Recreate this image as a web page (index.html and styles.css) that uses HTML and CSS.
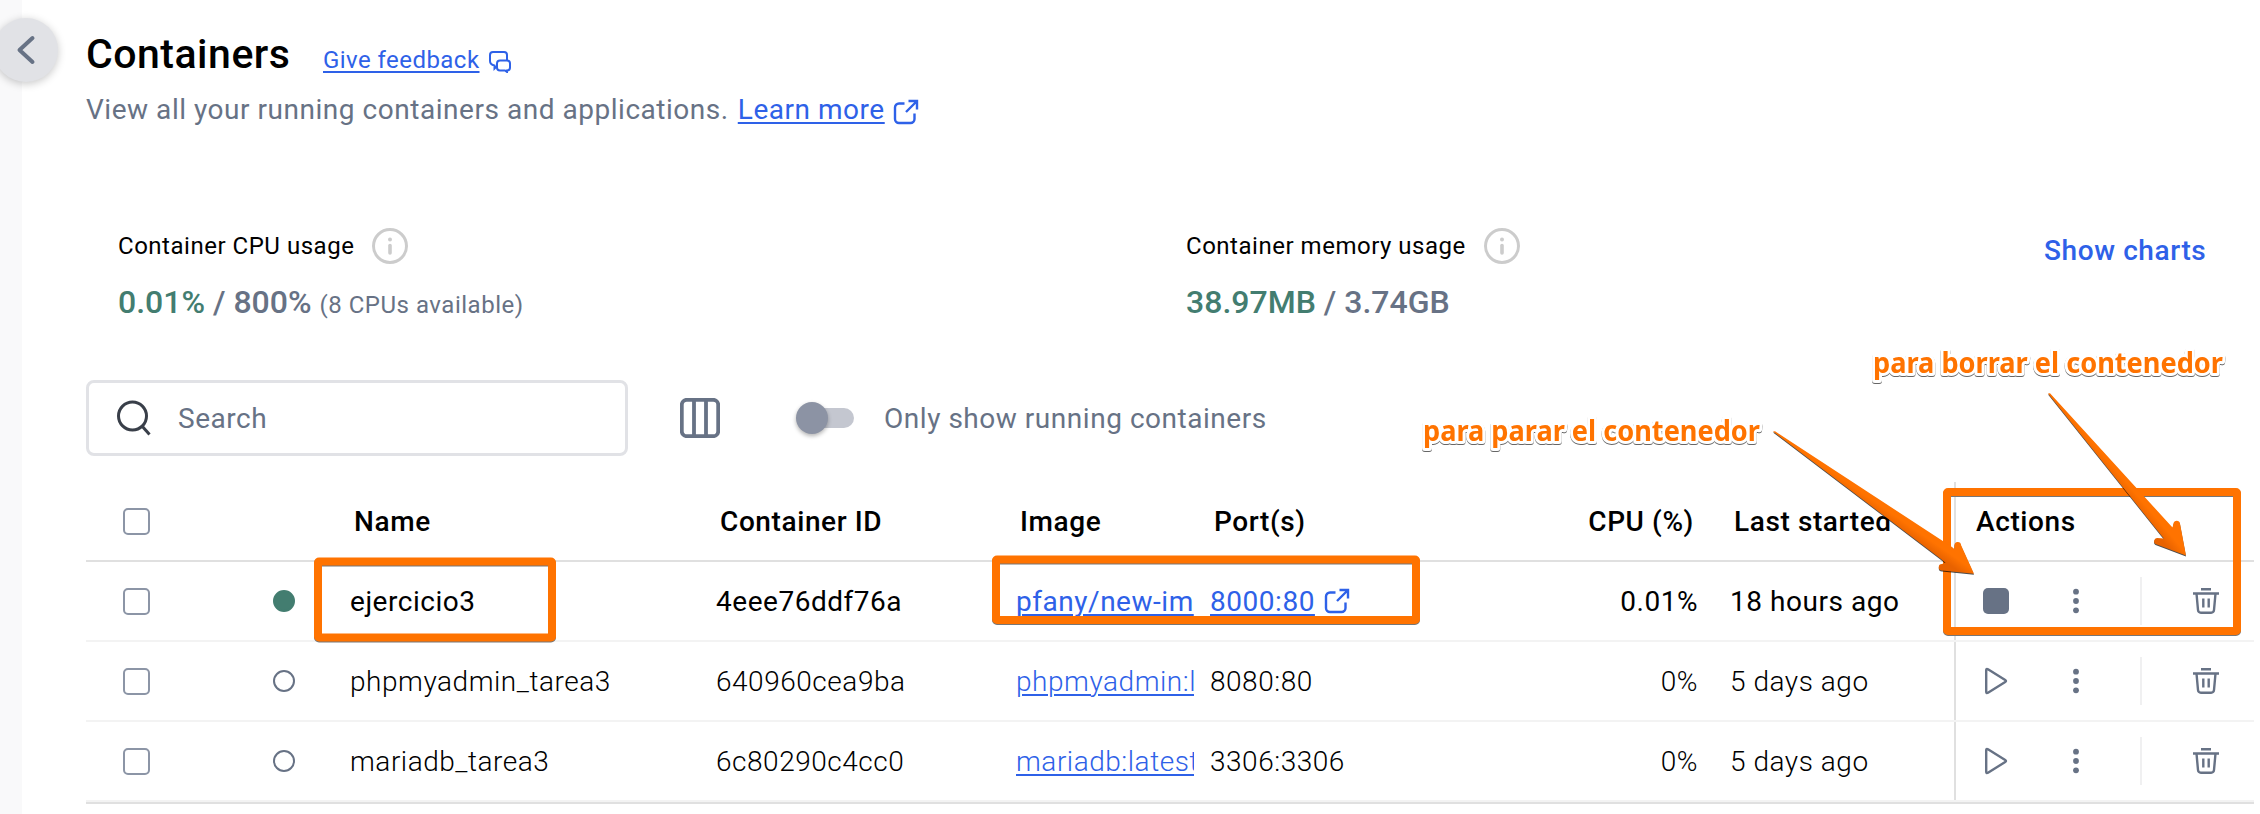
FILE: index.html
```html
<!DOCTYPE html>
<html lang="en">
<head>
<meta charset="utf-8">
<title>Containers</title>
<link rel="stylesheet" href="styles.css">
</head>
<body>
<svg class="sprite" aria-hidden="true">
  <symbol id="i-external" viewBox="0 0 26 26"><path d="M11.500 4.500H6a4 4 0 0 0-4 4V20a4 4 0 0 0 4 4H17.500a4 4 0 0 0 4-4V14.500M13 13 23 3M15.500 2H24V10.500" fill="none" stroke="currentColor" stroke-width="2.400"/></symbol>
  <symbol id="i-info" viewBox="0 0 36 36"><circle cx="18" cy="18" r="16.500" fill="none" stroke="currentColor" stroke-width="3"/><circle cx="18" cy="11.400" r="2" fill="currentColor"/><path d="M18 17.500V25" stroke="currentColor" stroke-width="3.600" stroke-linecap="round"/></symbol>
  <symbol id="i-trash" viewBox="0 0 26 26"><path d="M8 1.300H18M0 5.500H26M3.500 5.500 5 22a3 3 0 0 0 3 2.700H18A3 3 0 0 0 21 22L22.500 5.500M10.300 10.500V19.500M15.700 10.500V19.500" fill="none" stroke="currentColor" stroke-width="2.400"/></symbol>
  <symbol id="i-play" viewBox="0 0 26 28"><path d="M3.200 3.200V24.800q0 2 1.800 1L22.200 15q1.600-1 0-2L5 2.200Q3.200 1.200 3.200 3.200Z" fill="none" stroke="currentColor" stroke-width="2.400"/></symbol>
  <symbol id="i-stop" viewBox="0 0 26 28"><rect width="26" height="26" y="1" rx="5" fill="currentColor"/></symbol>
  <symbol id="i-more" viewBox="0 0 8 26"><g fill="currentColor"><circle cx="4" cy="3.700" r="2.900"/><circle cx="4" cy="13" r="2.900"/><circle cx="4" cy="22.300" r="2.900"/></g></symbol>
</svg>
<div class="app">
  <aside class="rail"><button class="collapse" aria-label="Collapse"><svg viewBox="0 0 20 30"><path d="M16.500 3 3.500 15 16.500 27" fill="none" stroke="currentColor" stroke-width="4" stroke-linecap="round" stroke-linejoin="round"/></svg></button></aside>
  <main class="main">
    <header class="head">
      <h1>Containers</h1>
      <a class="feedback">Give feedback</a>
      <svg class="chat" viewBox="0 0 22 22"><path d="M8 15 5.500 17.500V14.500C3 14 1 12.500 1 10V4a3 3 0 0 1 3-3H15a3 3 0 0 1 3 3V9.500M11 9.500h7a3 3 0 0 1 3 3v4a3 3 0 0 1-3 3v1.500l-2-1.500H11a3 3 0 0 1-3-3v-4a3 3 0 0 1 3-3Z" fill="none" stroke="currentColor" stroke-width="2"/></svg>
    </header>
    <p class="sub"><span>View all your running containers and applications.</span><a>Learn more</a><svg class="ext"><use href="#i-external"/></svg></p>
    <section class="stats">
      <div class="stat"><div class="stat-label"><span>Container CPU usage</span><svg class="info"><use href="#i-info"/></svg></div><div class="stat-value"><b>0.01%</b> / 800% <small>(8 CPUs available)</small></div></div>
      <div class="stat"><div class="stat-label"><span>Container memory usage</span><svg class="info"><use href="#i-info"/></svg></div><div class="stat-value"><b>38.97MB</b> / 3.74GB</div></div>
      <a class="charts">Show charts</a>
    </section>
    <section class="tools">
      <div class="search"><svg viewBox="0 0 34 36"><circle cx="15.500" cy="16" r="14" fill="none" stroke="currentColor" stroke-width="3"/><path d="M25 26 32.500 34.500" stroke="currentColor" stroke-width="3"/></svg><span>Search</span></div>
      <svg class="cols" viewBox="0 0 40 40"><rect x="1.800" y="1.800" width="36.400" height="36.400" rx="5" fill="none" stroke="currentColor" stroke-width="3.800"/><path d="M14 2V38M26 2V38" stroke="currentColor" stroke-width="3.800"/></svg>
      <div class="switch"><i></i></div>
      <span class="only">Only show running containers</span>
    </section>
    <section class="table">
      <div class="row thead">
        <div><i class="check"></i></div><div></div><div>Name</div><div>Container ID</div><div>Image</div><div>Port(s)</div><div class="num">CPU (%)</div><div class="started">Last started</div><div class="actions">Actions</div>
      </div>
      <div class="row running">
        <div><i class="check"></i></div><div><i class="dot"></i></div><div>ejercicio3</div><div>4eee76ddf76a</div><div class="image"><a>pfany/new-im</a></div><div><a>8000:80</a><svg class="ext"><use href="#i-external"/></svg></div><div class="num">0.01%</div><div class="started">18 hours ago</div>
        <div class="actions"><svg class="act"><use href="#i-stop"/></svg><svg class="more"><use href="#i-more"/></svg><i class="sep"></i><svg class="trash"><use href="#i-trash"/></svg></div>
      </div>
      <div class="row">
        <div><i class="check"></i></div><div><i class="dot"></i></div><div>phpmyadmin_tarea3</div><div>640960cea9ba</div><div class="image"><a>phpmyadmin:l</a></div><div>8080:80</div><div class="num">0%</div><div class="started">5 days ago</div>
        <div class="actions"><svg class="act"><use href="#i-play"/></svg><svg class="more"><use href="#i-more"/></svg><i class="sep"></i><svg class="trash"><use href="#i-trash"/></svg></div>
      </div>
      <div class="row">
        <div><i class="check"></i></div><div><i class="dot"></i></div><div>mariadb_tarea3</div><div>6c80290c4cc0</div><div class="image"><a>mariadb:latest</a></div><div>3306:3306</div><div class="num">0%</div><div class="started">5 days ago</div>
        <div class="actions"><svg class="act"><use href="#i-play"/></svg><svg class="more"><use href="#i-more"/></svg><i class="sep"></i><svg class="trash"><use href="#i-trash"/></svg></div>
      </div>
    </section>
  </main>
  <svg class="notes" viewBox="0 0 2260 814">
    <defs>
      <linearGradient id="g1" gradientUnits="userSpaceOnUse" x1="1953" y1="548" x2="1944" y2="561"><stop offset="0.400" stop-color="#ff7300"/><stop offset="1" stop-color="#e86200"/></linearGradient>
      <linearGradient id="g2" gradientUnits="userSpaceOnUse" x1="2173" y1="527" x2="2160" y2="538"><stop offset="0.400" stop-color="#ff7300"/><stop offset="1" stop-color="#e86200"/></linearGradient>
    </defs>
    <g class="frames">
      <rect x="318" y="561.500" width="234" height="76" rx="1"/>
      <rect x="996" y="559.500" width="420" height="60.500" rx="1"/>
      <rect x="1947" y="492" width="290" height="139" rx="1"/>
    </g>
    <g class="arrows">
      <path fill="url(#g1)" d="M1773 431.500 1775 431.300 1952 547 1954.300 549 1954.500 545.500A3.200 3.200 0 0 1 1961 545L1974 573.800 1942 570.500A3.200 3.200 0 0 1 1942 564L1945.500 562.700 1941 559Z"/>
      <path fill="url(#g2)" d="M2048 393.500 2050 393.300 2172.500 527.500 2173.500 523.500A3.300 3.300 0 0 1 2180 523.500L2186 555.500 2155.500 544A3.300 3.300 0 0 1 2157 538L2164 538.500 2161 535Z"/>
    </g>
    <g class="captions">
      <text x="1423" y="440.500" textLength="337" lengthAdjust="spacingAndGlyphs">para parar el contenedor</text>
      <text x="1873" y="372.500" textLength="350" lengthAdjust="spacingAndGlyphs">para borrar el contenedor</text>
    </g>
  </svg>
</div>
</body>
</html>
```
FILE: styles.css
```css
* { box-sizing: border-box; }
body { margin: 0; background: #fff; font-family: Roboto, sans-serif; font-size: 28px; letter-spacing: 0.53px; color: #000; }
.sprite { position: absolute; width: 0; height: 0; }
.app { position: relative; display: flex; width: 2260px; height: 814px; overflow: hidden; }
.rail { flex: none; width: 22px; background: #f9f9fa; }
.collapse { position: absolute; left: -6px; top: 18px; width: 64px; height: 64px; border: 0; padding: 0; border-radius: 50%; background: #e1e2e6; color: #677285; display: flex; align-items: center; justify-content: center; box-shadow: 0 2px 8px rgba(0,0,0,.22); }
.collapse svg { width: 20px; height: 30px; }
.main { flex: 1; padding: 0 6px 0 64px; display: flex; flex-direction: column; }
a { color: #2e61e8; text-decoration: underline; text-decoration-thickness: 1.5px; text-underline-offset: 3px; }
.ext { width: 26px; height: 26px; color: #2e61e8; flex: none; }
.head { display: flex; align-items: baseline; height: 84px; padding-top: 30px; }
h1 { margin: 0; font-size: 41px; line-height: 48px; font-weight: 500; letter-spacing: 0.5px; width: 237px; }
.feedback { font-size: 24px; line-height: 30px; letter-spacing: 0.45px; }
.chat { width: 22px; height: 22px; margin-left: 9px; align-self: flex-start; margin-top: 21px; color: #2e61e8; }
.sub { margin: 9px 0 0; height: 34px; line-height: 34px; display: flex; color: #677285; }
.sub a { margin-left: 9px; }
.sub .ext { margin: 6px 0 0 8px; }
.stats { display: flex; height: 138px; margin-top: 101px; padding-left: 32px; }
.stat { width: 1068px; }
.stat-label { display: flex; align-items: center; height: 36px; font-size: 24px; gap: 18px; letter-spacing: 0.52px; }
.info { width: 36px; height: 36px; color: #ccc; }
.stat-value { margin-top: 18px; font-size: 32px; line-height: 40px; font-weight: 500; color: #677285; letter-spacing: 0; }
.stat-value b { font-weight: 500; color: #437d70; }
.stat-value small { font-size: 24px; font-weight: 400; letter-spacing: 0.52px; }
.charts { margin: 6px 0 0 -210px; font-weight: 500; text-decoration: none; line-height: 34px; letter-spacing: 0.6px; white-space: nowrap; }
.tools { display: flex; align-items: center; height: 76px; margin-top: 14px; color: #677285; }
.search { width: 542px; height: 76px; border: 3px solid #e1e2e6; border-radius: 8px; display: flex; align-items: center; padding-left: 28px; gap: 27px; }
.search svg { width: 34px; height: 36px; color: #393f49; }
.cols { width: 40px; height: 40px; margin-left: 52px; }
.switch { width: 58px; height: 20px; margin-left: 76px; border-radius: 10px; background: linear-gradient(90deg, transparent 8px, #c4c7d0 8px); }
.switch i { display: block; width: 32px; height: 32px; margin-top: -6px; border-radius: 50%; background: #8c93a4; box-shadow: 0 2px 4px rgba(0,0,0,.3); }
.only { margin-left: 30px; }
.table { margin-top: 26px; border-bottom: 2px solid #e0e0e0; }
.row { display: grid; grid-template-columns: 178px 86px 366px 300px 194px 260px 228px 256px 300px; height: 80px; border-bottom: 2px solid #f3f3f3; font-weight: 300; }
.row > div { display: flex; align-items: center; white-space: nowrap; }
.row > div:first-child { padding-left: 37px; }
.thead { border-bottom-color: #e0e0e0; font-weight: 500; letter-spacing: 0.6px; }
.thead > div:nth-child(n+3):nth-child(-n+6) { padding-left: 4px; }
.running { font-weight: 400; }
.row .num { justify-content: flex-end; }
.thead .num { padding-right: 4px; }
.started { padding-left: 32px; }
.thead .started { padding-left: 36px; }
.check { width: 27px; height: 27px; border: 2.500px solid #8c95a6; border-radius: 5px; }
.dot { width: 22px; height: 22px; margin-left: 9px; border: 2px solid #677285; border-radius: 50%; }
.running .dot { background: #437d70; border-color: #437d70; }
.image a { display: block; width: 178px; overflow: hidden; }
.row > div > .ext { margin-left: 9px; }
.row .actions { border-left: 2px solid #e0e0e0; color: #677285; }
.thead .actions { color: #000; padding-left: 20px; }
.act { width: 26px; height: 28px; margin-left: 27px; }
.more { width: 8px; height: 26px; margin-left: 63px; }
.sep { width: 2px; height: 48px; margin-left: 60px; background: #f0f0f1; }
.trash { width: 26px; height: 26px; margin-left: 51px; }
.notes { position: absolute; left: 0; top: 0; width: 2260px; height: 814px; pointer-events: none; }
.frames { fill: none; stroke: #ff7300; stroke-width: 8; stroke-linejoin: round; filter: drop-shadow(0 1px 0 #777); }
.arrows { filter: drop-shadow(0 1px 0.500px rgba(0,0,0,.7)); }
.captions { font-family: "Noto Sans", sans-serif; font-size: 28px; font-weight: 700; letter-spacing: 0; fill: #ff7300; stroke: #fff; stroke-width: 6px; stroke-linejoin: round; paint-order: stroke; filter: drop-shadow(0 1px 0.500px rgba(0,0,0,.6)); }
```
